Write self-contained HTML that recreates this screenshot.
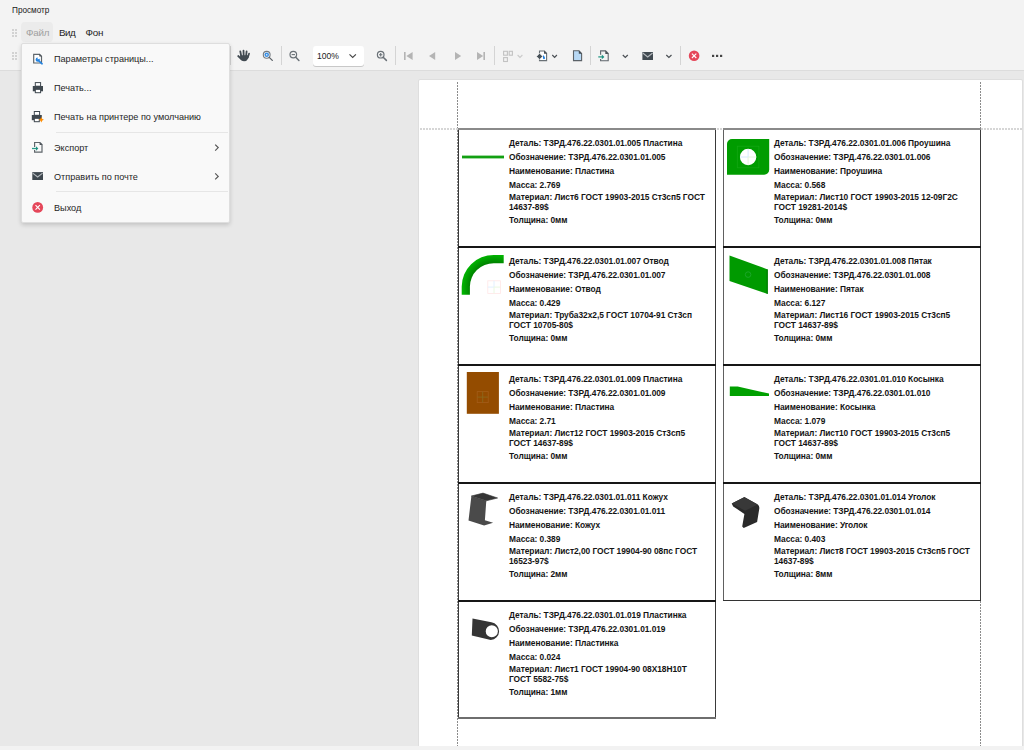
<!DOCTYPE html><html><head><meta charset="utf-8"><style>
*{margin:0;padding:0;box-sizing:border-box}
html,body{width:1024px;height:750px;overflow:hidden;background:#f3f3f3;font-family:"Liberation Sans",sans-serif;position:relative}
.a{position:absolute}
.t{position:absolute;white-space:nowrap;line-height:1}
.ct{position:absolute;font-weight:bold;font-size:8.4px;letter-spacing:-0.045px;color:#141414;line-height:1;white-space:nowrap}
.mi{position:absolute;font-size:9.2px;color:#1f1f1f;line-height:1;white-space:nowrap}
.sep{position:absolute;width:1px;height:19px;top:46px;background:#d4d4d4}
svg{position:absolute;overflow:visible}
</style></head><body>
<div class="t" style="left:12px;top:7px;font-size:8.2px;color:#1a1a1a">Просмотр</div>
<div class="a" style="left:12px;top:29px;width:2px;height:2px;background:#d2d2d2"></div><div class="a" style="left:15px;top:29px;width:2px;height:2px;background:#d2d2d2"></div><div class="a" style="left:12px;top:32px;width:2px;height:2px;background:#d2d2d2"></div><div class="a" style="left:15px;top:32px;width:2px;height:2px;background:#d2d2d2"></div><div class="a" style="left:12px;top:35px;width:2px;height:2px;background:#d2d2d2"></div><div class="a" style="left:15px;top:35px;width:2px;height:2px;background:#d2d2d2"></div>
<div class="a" style="left:21px;top:22px;width:32px;height:20px;background:#ebebeb;border-radius:4px"></div>
<div class="mi" style="left:26px;top:27.6px;color:#a0a0a0;font-size:9.8px;letter-spacing:-0.2px">Файл</div>
<div class="mi" style="left:59px;top:27.6px;font-size:9.8px;letter-spacing:-0.45px">Вид</div>
<div class="mi" style="left:85.6px;top:27.6px;font-size:9.8px;letter-spacing:-0.2px">Фон</div>
<div class="a" style="left:0;top:70px;width:1024px;height:676px;background:#e8e8e8;border-top:1px solid #dcdcdc"></div>
<div class="a" style="left:418px;top:79px;width:605px;height:690px;background:#fff;border:1px solid #dedede;border-radius:2px"></div>
<div class="a" style="left:457px;top:82px;width:1px;height:664px;background:repeating-linear-gradient(to bottom,#8c8c8c 0 2px,transparent 2px 3px)"></div>
<div class="a" style="left:980px;top:82px;width:1px;height:664px;background:repeating-linear-gradient(to bottom,#8c8c8c 0 2px,transparent 2px 3px)"></div>
<div class="a" style="left:420px;top:128px;width:602px;height:2px;background:repeating-linear-gradient(to right,#d6d6d6 0 2px,transparent 2px 3px)"></div>
<div class="a" style="left:458px;top:128px;width:258px;height:118px;border-left:1px solid #3a3a3a;border-right:1px solid #3a3a3a"></div>
<div class="ct" style="left:509px;top:138.90px">Деталь: ТЗРД.476.22.0301.01.005 Пластина</div>
<div class="ct" style="left:509px;top:153.30px">Обозначение: ТЗРД.476.22.0301.01.005</div>
<div class="ct" style="left:509px;top:166.80px">Наименование: Пластина</div>
<div class="ct" style="left:509px;top:181.40px">Масса: 2.769</div>
<div class="ct" style="left:509px;top:192.80px">Материал: Лист6 ГОСТ 19903-2015 Ст3сп5 ГОСТ</div>
<div class="ct" style="left:509px;top:202.80px">14637-89$</div>
<div class="ct" style="left:509px;top:216.25px">Толщина: 0мм</div>
<div class="a" style="left:723px;top:128px;width:258px;height:118px;border-left:1px solid #606060;border-right:1px solid #3a3a3a"></div>
<div class="ct" style="left:774px;top:138.90px">Деталь: ТЗРД.476.22.0301.01.006 Проушина</div>
<div class="ct" style="left:774px;top:153.30px">Обозначение: ТЗРД.476.22.0301.01.006</div>
<div class="ct" style="left:774px;top:166.80px">Наименование: Проушина</div>
<div class="ct" style="left:774px;top:181.40px">Масса: 0.568</div>
<div class="ct" style="left:774px;top:192.80px">Материал: Лист10 ГОСТ 19903-2015 12-09Г2С</div>
<div class="ct" style="left:774px;top:202.80px">ГОСТ 19281-2014$</div>
<div class="ct" style="left:774px;top:216.25px">Толщина: 0мм</div>
<div class="a" style="left:458px;top:246px;width:258px;height:118px;border-left:1px solid #3a3a3a;border-right:1px solid #3a3a3a"></div>
<div class="ct" style="left:509px;top:256.90px">Деталь: ТЗРД.476.22.0301.01.007 Отвод</div>
<div class="ct" style="left:509px;top:271.30px">Обозначение: ТЗРД.476.22.0301.01.007</div>
<div class="ct" style="left:509px;top:284.80px">Наименование: Отвод</div>
<div class="ct" style="left:509px;top:299.40px">Масса: 0.429</div>
<div class="ct" style="left:509px;top:310.80px">Материал: Труба32х2,5 ГОСТ 10704-91 Ст3сп</div>
<div class="ct" style="left:509px;top:320.80px">ГОСТ 10705-80$</div>
<div class="ct" style="left:509px;top:334.25px">Толщина: 0мм</div>
<div class="a" style="left:723px;top:246px;width:258px;height:118px;border-left:1px solid #606060;border-right:1px solid #3a3a3a"></div>
<div class="ct" style="left:774px;top:256.90px">Деталь: ТЗРД.476.22.0301.01.008 Пятак</div>
<div class="ct" style="left:774px;top:271.30px">Обозначение: ТЗРД.476.22.0301.01.008</div>
<div class="ct" style="left:774px;top:284.80px">Наименование: Пятак</div>
<div class="ct" style="left:774px;top:299.40px">Масса: 6.127</div>
<div class="ct" style="left:774px;top:310.80px">Материал: Лист16 ГОСТ 19903-2015 Ст3сп5</div>
<div class="ct" style="left:774px;top:320.80px">ГОСТ 14637-89$</div>
<div class="ct" style="left:774px;top:334.25px">Толщина: 0мм</div>
<div class="a" style="left:458px;top:364px;width:258px;height:118px;border-left:1px solid #3a3a3a;border-right:1px solid #3a3a3a"></div>
<div class="ct" style="left:509px;top:374.90px">Деталь: ТЗРД.476.22.0301.01.009 Пластина</div>
<div class="ct" style="left:509px;top:389.30px">Обозначение: ТЗРД.476.22.0301.01.009</div>
<div class="ct" style="left:509px;top:402.80px">Наименование: Пластина</div>
<div class="ct" style="left:509px;top:417.40px">Масса: 2.71</div>
<div class="ct" style="left:509px;top:428.80px">Материал: Лист12 ГОСТ 19903-2015 Ст3сп5</div>
<div class="ct" style="left:509px;top:438.80px">ГОСТ 14637-89$</div>
<div class="ct" style="left:509px;top:452.25px">Толщина: 0мм</div>
<div class="a" style="left:723px;top:364px;width:258px;height:118px;border-left:1px solid #606060;border-right:1px solid #3a3a3a"></div>
<div class="ct" style="left:774px;top:374.90px">Деталь: ТЗРД.476.22.0301.01.010 Косынка</div>
<div class="ct" style="left:774px;top:389.30px">Обозначение: ТЗРД.476.22.0301.01.010</div>
<div class="ct" style="left:774px;top:402.80px">Наименование: Косынка</div>
<div class="ct" style="left:774px;top:417.40px">Масса: 1.079</div>
<div class="ct" style="left:774px;top:428.80px">Материал: Лист10 ГОСТ 19903-2015 Ст3сп5</div>
<div class="ct" style="left:774px;top:438.80px">ГОСТ 14637-89$</div>
<div class="ct" style="left:774px;top:452.25px">Толщина: 0мм</div>
<div class="a" style="left:458px;top:482px;width:258px;height:118px;border-left:1px solid #3a3a3a;border-right:1px solid #3a3a3a"></div>
<div class="ct" style="left:509px;top:492.90px">Деталь: ТЗРД.476.22.0301.01.011 Кожух</div>
<div class="ct" style="left:509px;top:507.30px">Обозначение: ТЗРД.476.22.0301.01.011</div>
<div class="ct" style="left:509px;top:520.80px">Наименование: Кожух</div>
<div class="ct" style="left:509px;top:535.40px">Масса: 0.389</div>
<div class="ct" style="left:509px;top:546.80px">Материал: Лист2,00 ГОСТ 19904-90 08пс ГОСТ</div>
<div class="ct" style="left:509px;top:556.80px">16523-97$</div>
<div class="ct" style="left:509px;top:570.25px">Толщина: 2мм</div>
<div class="a" style="left:723px;top:482px;width:258px;height:119px;border-left:1px solid #606060;border-right:1px solid #3a3a3a"></div>
<div class="ct" style="left:774px;top:492.90px">Деталь: ТЗРД.476.22.0301.01.014 Уголок</div>
<div class="ct" style="left:774px;top:507.30px">Обозначение: ТЗРД.476.22.0301.01.014</div>
<div class="ct" style="left:774px;top:520.80px">Наименование: Уголок</div>
<div class="ct" style="left:774px;top:535.40px">Масса: 0.403</div>
<div class="ct" style="left:774px;top:546.80px">Материал: Лист8 ГОСТ 19903-2015 Ст3сп5 ГОСТ</div>
<div class="ct" style="left:774px;top:556.80px">14637-89$</div>
<div class="ct" style="left:774px;top:570.25px">Толщина: 8мм</div>
<div class="a" style="left:458px;top:600px;width:258px;height:119px;border-left:1px solid #3a3a3a;border-right:1px solid #3a3a3a"></div>
<div class="ct" style="left:509px;top:610.90px">Деталь: ТЗРД.476.22.0301.01.019 Пластинка</div>
<div class="ct" style="left:509px;top:625.30px">Обозначение: ТЗРД.476.22.0301.01.019</div>
<div class="ct" style="left:509px;top:638.80px">Наименование: Пластинка</div>
<div class="ct" style="left:509px;top:653.40px">Масса: 0.024</div>
<div class="ct" style="left:509px;top:664.80px">Материал: Лист1 ГОСТ 19904-90 08Х18Н10Т</div>
<div class="ct" style="left:509px;top:674.80px">ГОСТ 5582-75$</div>
<div class="ct" style="left:509px;top:688.25px">Толщина: 1мм</div>
<div class="a" style="left:458px;top:128px;width:258px;height:2px;background:#8a8a8a"></div>
<div class="a" style="left:458px;top:246px;width:258px;height:2px;background:#161616"></div>
<div class="a" style="left:458px;top:364px;width:258px;height:2px;background:#161616"></div>
<div class="a" style="left:458px;top:482px;width:258px;height:2px;background:#161616"></div>
<div class="a" style="left:458px;top:600px;width:258px;height:2px;background:#161616"></div>
<div class="a" style="left:458px;top:717px;width:258px;height:2px;background:#6e6e6e"></div>
<div class="a" style="left:723px;top:128px;width:258px;height:2px;background:#8a8a8a"></div>
<div class="a" style="left:723px;top:246px;width:258px;height:2px;background:#161616"></div>
<div class="a" style="left:723px;top:364px;width:258px;height:2px;background:#161616"></div>
<div class="a" style="left:723px;top:482px;width:258px;height:2px;background:#161616"></div>
<div class="a" style="left:723px;top:600px;width:258px;height:1px;background:#333333"></div>
<div class="a" style="left:12px;top:52px;width:2px;height:2px;background:#d2d2d2"></div><div class="a" style="left:15px;top:52px;width:2px;height:2px;background:#d2d2d2"></div><div class="a" style="left:12px;top:55px;width:2px;height:2px;background:#d2d2d2"></div><div class="a" style="left:15px;top:55px;width:2px;height:2px;background:#d2d2d2"></div><div class="a" style="left:12px;top:58px;width:2px;height:2px;background:#d2d2d2"></div><div class="a" style="left:15px;top:58px;width:2px;height:2px;background:#d2d2d2"></div>
<div class="sep" style="left:230px"></div>
<div class="sep" style="left:281px"></div>
<div class="sep" style="left:395px"></div>
<div class="sep" style="left:494px"></div>
<div class="sep" style="left:590px"></div>
<div class="sep" style="left:680px"></div>
<div class="a" style="left:313px;top:46px;width:51px;height:20px;background:#fff;border-radius:3px;box-shadow:0 1px 0 #c8c8c8"></div>
<div class="t" style="left:317px;top:52px;font-size:8.6px;color:#222">100%</div>
<svg class="a" style="left:0;top:0" width="1024" height="750"><path d="M349.5 54.3 L352.7 57.5 L355.9 54.3" fill="none" stroke="#444" stroke-width="1.1"/><g fill="none" stroke="#414a51" stroke-linecap="round"><path d="M240.3 51.4 L241.2 56" stroke-width="1.8"/><path d="M243.5 50.6 L243.7 56" stroke-width="1.8"/><path d="M246.6 51.3 L246.1 56" stroke-width="1.8"/><path d="M249.1 53.6 L247.9 57.2" stroke-width="1.7"/><path d="M238.2 56 L240.9 58.6" stroke-width="1.8"/></g><path d="M240.2 55.2 H248.8 L248.2 58.4 Q246.8 61.3 244 61.3 Q241.6 61.3 239.9 58.8 Z" fill="#414a51"/><circle cx="266.7" cy="54.8" r="3.4" fill="#fff" stroke="#74797e" stroke-width="1.1"/><circle cx="266.7" cy="54.8" r="2.3" fill="#3a8fe3"/><rect x="266" y="54.1" width="1.4" height="1.4" fill="#d8e9fb"/><path d="M269.2 57.4 L272.3 60.4" stroke="#5a6066" stroke-width="1.3" stroke-linecap="round"/><circle cx="293.3" cy="54.6" r="3.3" fill="none" stroke="#6a7177" stroke-width="1.2"/><path d="M291.6 54.6 H295" stroke="#6a7177" stroke-width="1.1"/><path d="M295.8 57.2 L298.9 60.4" stroke="#6a7177" stroke-width="1.5" stroke-linecap="round"/><circle cx="380.7" cy="54.7" r="3.3" fill="none" stroke="#6a7177" stroke-width="1.2"/><path d="M379 54.7 H382.4 M380.7 53 V56.4" stroke="#6a7177" stroke-width="1.1"/><path d="M383.2 57.3 L386.4 60.4" stroke="#6a7177" stroke-width="1.5" stroke-linecap="round"/><rect x="404" y="52" width="1.6" height="8" fill="#b4b4b4"/><path d="M412.6 52 V60 L406.4 56 Z" fill="#b4b4b4"/><path d="M435.2 52 V60 L429 56 Z" fill="#b4b4b4"/><path d="M455 52 V60 L461.2 56 Z" fill="#b4b4b4"/><path d="M477 52 V60 L483.2 56 Z" fill="#b4b4b4"/><rect x="483.4" y="52" width="1.6" height="8" fill="#b4b4b4"/><g fill="none" stroke="#c2c2c2" stroke-width="1.1"><rect x="503.6" y="51.3" width="3.8" height="3.9"/><rect x="509.2" y="51.3" width="3.2" height="3.9"/><rect x="503.6" y="57.6" width="3.8" height="3.9"/></g><path d="M517.6 55 L520 57.4 L522.4 55" fill="none" stroke="#cacaca" stroke-width="1.1"/><path d="M539.5 51 H544.3 L546.6 53.3 V60.6 H539.5 Z" fill="#fff" stroke="#6a7176" stroke-width="1.1"/><path d="M544 50.6 L547.1 53.7 H544 Z" fill="#4a5157"/><path d="M539.6 53.3 L542.7 56.4 L539.6 59.5 L536.5 56.4 Z" fill="#465057" stroke="#f3f3f3" stroke-width="0.7" stroke-linejoin="round"/><path d="M543 55 Q545.2 57 545 58.2 Q544.6 59.3 543.6 59.1 Q543 58.8 543 58 Z" fill="#1f7fe0"/><path d="M552.3 55 L554.6 57.4 L556.9 55" fill="none" stroke="#4a4f54" stroke-width="1.2"/><path d="M573.5 50.8 H579 L581.6 53.4 V60.6 H573.5 Z" fill="#b7d8f4" stroke="#5b6268" stroke-width="1.1"/><path d="M578.8 50.4 L582.1 53.7 H578.8 Z" fill="#444c52"/><path d="M600.6 54.8 V50.9 H605.6 L608.2 53.5 V60.7 H600.6 V59" fill="none" stroke="#60676d" stroke-width="1.1"/><path d="M605.3 50.6 L608.7 54 H605.3 Z" fill="#4a5157"/><path d="M598.3 56.9 H602.2" stroke="#2a9a88" stroke-width="1.3"/><path d="M601.8 54.6 L604.4 56.9 L601.8 59.2 Z" fill="#1f9080"/><path d="M622.8 55 L625.3 57.5 L627.8 55" fill="none" stroke="#4a4f54" stroke-width="1.2"/><rect x="642.4" y="52" width="10.6" height="8" fill="#414a51"/><path d="M642.8 53 L647.7 57 L652.6 53" fill="none" stroke="#b4b9bd" stroke-width="1.1"/><path d="M666.3 55 L668.9 57.5 L671.5 55" fill="none" stroke="#4a4f54" stroke-width="1.2"/><circle cx="694.1" cy="55.8" r="5.3" fill="#e5475a"/><path d="M691.9 53.6 L696.3 58 M696.3 53.6 L691.9 58" stroke="#fff" stroke-width="1.1"/><g fill="#444"><rect x="712" y="54.8" width="2.2" height="2.2"/><rect x="716" y="54.8" width="2.2" height="2.2"/><rect x="720" y="54.8" width="2.2" height="2.2"/></g></svg>
<div class="a" style="left:21px;top:43px;width:209px;height:180px;background:#f9f9f9;border:1px solid #dedede;border-radius:2px;box-shadow:0 2px 4px rgba(0,0,0,0.16)"></div>
<div class="mi" style="left:54px;top:54.2px;font-size:9.8px;transform:scaleX(0.93);transform-origin:0 0">Параметры страницы...</div>
<div class="mi" style="left:54px;top:83.0px;font-size:9.8px;transform:scaleX(0.93);transform-origin:0 0">Печать...</div>
<div class="mi" style="left:54px;top:111.8px;font-size:9.8px;transform:scaleX(0.93);transform-origin:0 0">Печать на принтере по умолчанию</div>
<div class="mi" style="left:54px;top:143.0px;font-size:9.8px;transform:scaleX(0.93);transform-origin:0 0">Экспорт</div>
<div class="mi" style="left:54px;top:171.8px;font-size:9.8px;transform:scaleX(0.93);transform-origin:0 0">Отправить по почте</div>
<div class="mi" style="left:54px;top:203.1px;font-size:9.8px;transform:scaleX(0.93);transform-origin:0 0">Выход</div>
<div class="a" style="left:56px;top:132px;width:172px;height:1px;background:#e6e6e6"></div>
<div class="a" style="left:56px;top:191px;width:172px;height:1px;background:#e6e6e6"></div>
<svg class="a" style="left:0;top:0" width="1024" height="750"><path d="M215.2 144.6 L218.2 147.6 L215.2 150.6" fill="none" stroke="#555" stroke-width="1.2"/><path d="M215.2 173.4 L218.2 176.4 L215.2 179.4" fill="none" stroke="#555" stroke-width="1.2"/><path d="M33.7 54.3 H39.6 L41.5 56.2 V63 H33.7 Z" fill="#fff" stroke="#5f666b" stroke-width="1.2"/><path d="M39.3 53.7 L42.1 56.5 H39.3 Z" fill="#4a5157"/><circle cx="37.7" cy="59.7" r="2.1" fill="#2384e3"/><path d="M37.6 57.2 L37.7 59.6 L39.9 58.6 L40 57 Z" fill="#fff"/><path d="M38.6 60.6 L42.1 63.8" stroke="#2384e3" stroke-width="1.6" stroke-linecap="round"/><rect x="35.3" y="82.6" width="5.3" height="3.6" fill="#fff" stroke="#3f484f" stroke-width="1"/><path d="M32.8 86 H43 V91.3 H32.8 Z" fill="#3f484f"/><rect x="35.3" y="89.3" width="5.3" height="3.4" fill="#fff" stroke="#3f484f" stroke-width="1"/><rect x="34.3" y="111.5" width="5.3" height="3.8" fill="#fff" stroke="#3f484f" stroke-width="1"/><path d="M31.8 115 H41.8 V120.2 H31.8 Z" fill="#3f484f"/><rect x="34.3" y="118.3" width="5" height="3.4" fill="#fff" stroke="#3f484f" stroke-width="1"/><path d="M41.3 117 L42.3 119 L44 119.8 L42.3 120.6 L41.3 122.6 L40.3 120.6 L38.6 119.8 L40.3 119 Z" fill="#ff8c00"/><path d="M34.6 147 V142.5 H40 L42 144.5 V152.2 H34.6 V150" fill="none" stroke="#5f666b" stroke-width="1.2"/><path d="M39.6 142.2 L42.5 145.1 H39.6 Z" fill="#4a5157"/><path d="M32 148.5 H36.2" stroke="#2a9a88" stroke-width="1.3"/><path d="M36 146.2 L38.3 148.5 L36 150.8 Z" fill="#1f9080"/><rect x="32.3" y="172.1" width="10.7" height="7.9" fill="#3f484f"/><path d="M32.7 173.1 L37.65 177 L42.6 173.1" fill="none" stroke="#b4b9bd" stroke-width="1.1"/><circle cx="37.7" cy="207.4" r="5.4" fill="#e5475a"/><path d="M35.5 205.2 L39.9 209.6 M39.9 205.2 L35.5 209.6" stroke="#fff" stroke-width="1.1"/></svg>
<svg class="a" style="left:0;top:0" width="1024" height="750"><defs><radialGradient id="og" cx="493.8" cy="286.6" r="32.1" gradientUnits="userSpaceOnUse"><stop offset="0.72" stop-color="#007f00"/><stop offset="1" stop-color="#00b600"/></radialGradient></defs><rect x="462" y="155.6" width="42" height="2.8" fill="#12a012"/><path fill-rule="evenodd" fill="#009c00" d="M732 139.1 H769.2 V169.7 A5 5 0 0 1 764.2 174.7 H727 V144.1 A5 5 0 0 1 732 139.1 Z M756.3 157 A8.2 8.2 0 1 0 739.9 157 A8.2 8.2 0 1 0 756.3 157 Z"/><rect x="737.3" y="146.2" width="21.6" height="21.6" fill="none" stroke="#14a814" stroke-width="0.7"/><path d="M740 157 H748.1 M748.1 149 V157" stroke="#d6eafc" stroke-width="1"/><path d="M748.1 157 H756.2 M748.1 157 V165" stroke="#e4f6dc" stroke-width="1"/><path fill="url(#og)" d="M461.7 294.8 V286.6 A32.1 31.7 0 0 1 493.8 254.9 H503.7 V263.3 H493.8 A23.9 23.3 0 0 0 469.9 286.6 V294.8 Z"/><path fill="#009a00" d="M729.5 255.6 L767.6 269.4 V294 L729.5 281 Z"/><path fill="#007a00" d="M766.6 269 L767.8 269.4 V294 L766.6 293.6 Z"/><circle cx="748.1" cy="274.6" r="2.8" fill="none" stroke="#22a832" stroke-width="0.8"/><rect x="487.8" y="280.8" width="12.6" height="12.6" fill="none" stroke="#ffe6e6" stroke-width="0.8"/><path d="M487.8 287.1 H494 M494 280.8 V287.1" stroke="#e2f0ff" stroke-width="1"/><path d="M494 287.1 H500.4 M494 287.1 V293.4" stroke="#eaf8e2" stroke-width="1"/><rect x="466.8" y="372" width="32.1" height="41.8" fill="#944c00"/><rect x="477.2" y="391.6" width="11" height="11" fill="none" stroke="#a45c18" stroke-width="0.8"/><path d="M482.7 391.6 V402.6 M477.2 397.1 H488.2" stroke="#8a6a20" stroke-width="0.8"/><path fill="#00a000" d="M729.8 386.5 H737.7 L769 393.6 V395.9 H729.8 Z"/><path fill="#4a4a4a" d="M471.4 496 L486.3 500.8 L484.9 520.2 L493.1 522.8 L484.1 525.4 L468.5 520.6 Z"/><path fill="#353535" stroke="#353535" stroke-width="0.6" stroke-linejoin="round" d="M471.4 496 L483 493.1 L497.6 498 L486.3 500.8 Z"/><path fill="#2a2a2a" d="M731.7 503.4 L744.4 497.1 L757.8 504.5 Q759.6 506 759.3 508.5 L757.1 522.1 L743.7 528.1 L742.2 526.6 L744.4 513.9 L733.2 506.4 Z"/><path fill="#383838" d="M731.9 503.5 L744.4 497.3 L757.6 504.6 L745.2 510.8 Z"/><path fill="#353535" fill-rule="evenodd" d="M472.5 618.4 L491.4 622.3 A8.9 8.9 0 0 1 490.8 640 L471.8 635.6 Z M497.9 631.2 A6.1 6.0 0 1 0 485.7 631.2 A6.1 6.0 0 1 0 497.9 631.2 Z"/></svg>
<div class="a" style="left:0;top:746px;width:1024px;height:4px;background:#f2f2f2"></div>
</body></html>
